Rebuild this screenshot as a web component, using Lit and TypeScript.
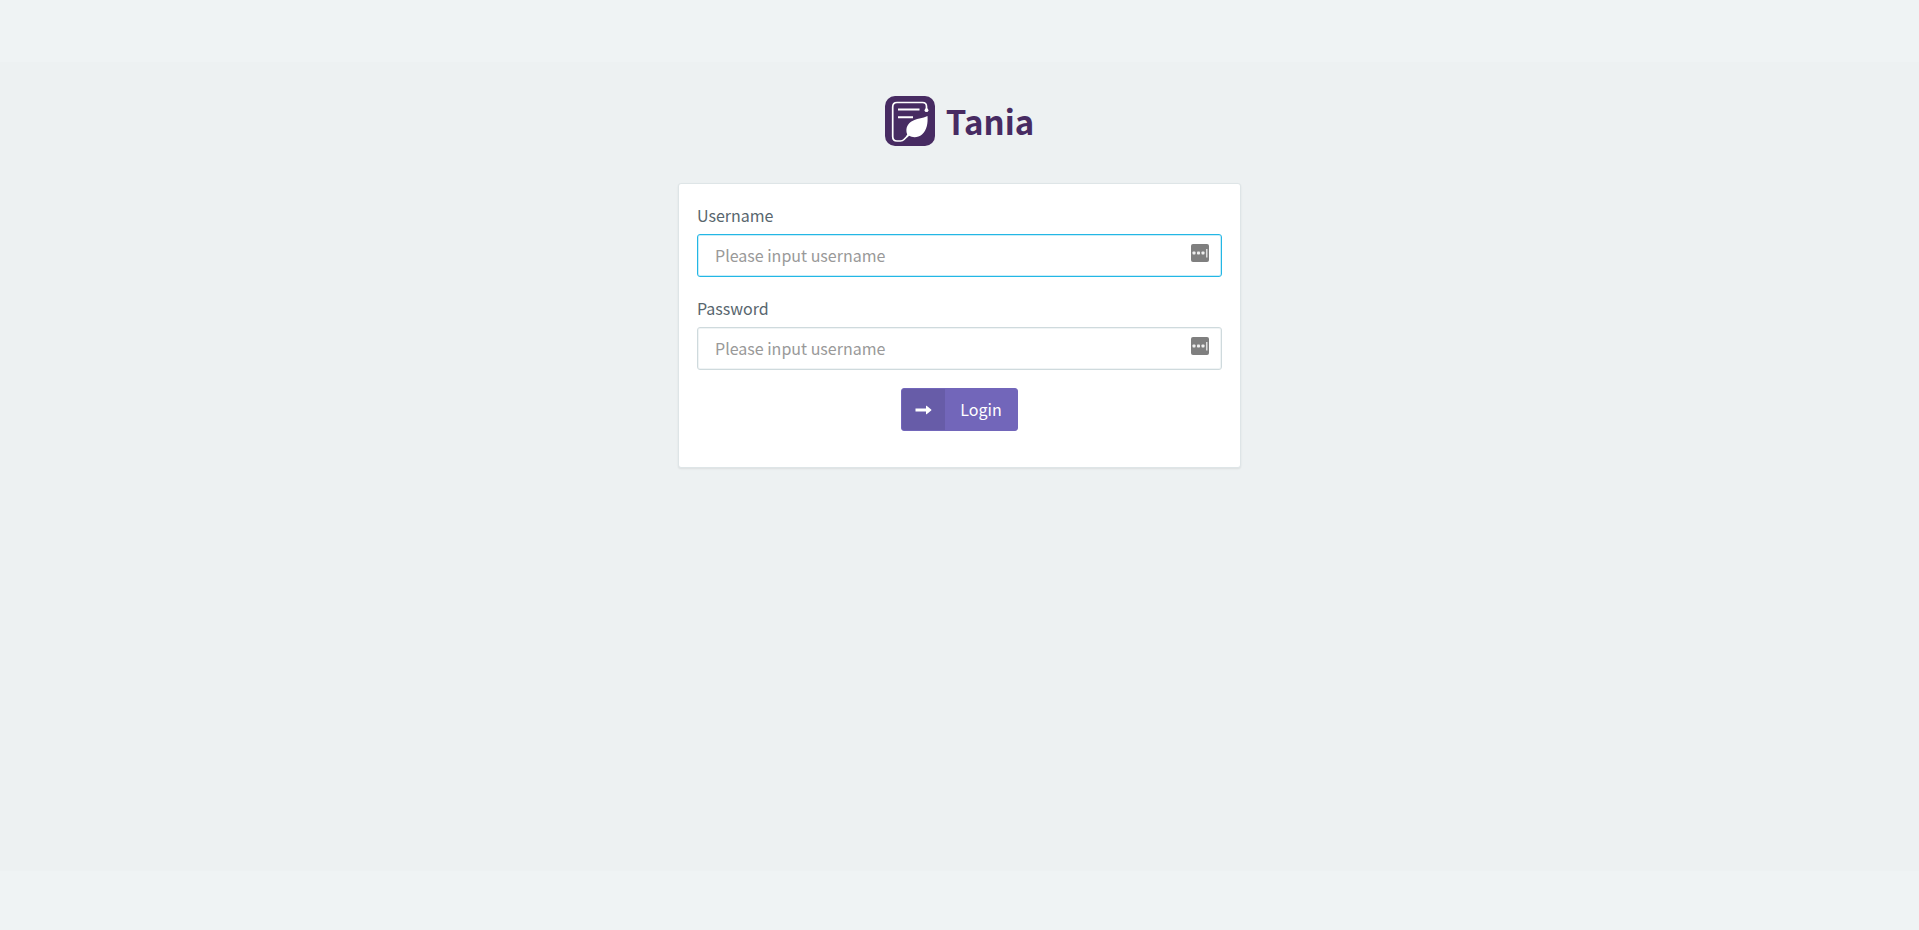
import { LitElement, html, css, svg } from "lit";
import { customElement, property } from "lit/decorators.js";

@customElement("tania-logo")
export class TaniaLogo extends LitElement {
  static styles = css`
    :host {
      display: flex;
      align-items: center;
      justify-content: center;
      gap: 11px;
      color: #472b62;
    }
    .mark {
      display: block;
      width: 50px;
      height: 50px;
    }
    .name {
      font-size: 33px;
      line-height: 50px;
      font-weight: 700;
    }
  `;

  render() {
    return html`
      <svg class="mark" viewBox="0 0 50 50" aria-hidden="true">
        <rect width="50" height="50" rx="10" fill="#472b62" />
        <path
          d="M41.5 14V10.5Q41.5 6.5 37.5 6.5H12Q7.7 6.5 7.7 11V40.5Q7.7 45 12 45H15.5Q17.5 45 19 43.5L23 39.5"
          fill="none"
          stroke="#fff"
          stroke-width="1.7"
        />
        <circle cx="41.5" cy="14.2" r="1.9" fill="#fff" />
        <path d="M13 13.5H34.5M13 21.3H28" stroke="#fff" stroke-width="2" />
        <path
          d="M42.5 20C43 27 42 34 37 38.5C33 42 27.5 41.8 24 39.8L22 41.5L21 40.5L22.2 38.5C20.5 34 21.5 29 26 25.8C31 22.3 38 22.3 42.5 20Z"
          fill="#fff"
        />
      </svg>
      <span class="name">Tania</span>
    `;
  }
}

@customElement("login-field")
export class LoginField extends LitElement {
  @property() label = "";
  @property() type = "text";
  @property() placeholder = "";
  @property({ type: Boolean }) active = false;

  static styles = css`
    :host {
      display: block;
    }
    .label {
      display: block;
      margin-bottom: 5px;
      line-height: 27px;
      color: #58666e;
    }
    .box {
      display: flex;
      box-sizing: border-box;
      height: 43px;
      border: 1px solid #cfdadd;
      border-radius: 3px;
      background: #fff;
      box-shadow: inset 0 0 0 1px #f0f4f5;
    }
    .box.active {
      border-color: #23b7e5;
      box-shadow: inset 0 0 0 1px #c8edf9;
    }
    .input {
      flex: 1;
      min-width: 0;
      padding: 0 0 2px 17px;
      border: 0;
      outline: 0;
      background: none;
      font: inherit;
      color: #58666e;
    }
    .input::placeholder {
      color: #999;
      opacity: 1;
    }
    .manager {
      width: 18px;
      height: 18px;
      margin: 9px 12px 0 8px;
    }
  `;

  render() {
    return html`
      <label class="label" for="field">${this.label}</label>
      <div class="box ${this.active ? "active" : ""}">
        <input class="input" id="field" type=${this.type} placeholder=${this.placeholder} />
        <svg class="manager" viewBox="0 0 18 18" aria-hidden="true">
          <rect width="18" height="18" rx="2" fill="#7f7f7f" />
          ${[1.5, 6, 10.5].map(
            (x) => svg`<rect x=${x} y="7.5" width="3" height="3" rx="0.8" fill="#eee" />`
          )}
          <rect x="15" y="5" width="1.5" height="8.5" fill="#ddd" />
        </svg>
      </div>
    `;
  }
}

@customElement("app-root")
export class AppRoot extends LitElement {
  static styles = css`
    :host {
      display: flex;
      flex-direction: column;
      min-height: 100vh;
      background: #eff3f4;
      font-family: "Noto Sans CJK SC", "Noto Sans", sans-serif;
      font-size: 16px;
      color: #58666e;
    }
    .header {
      height: 62px;
    }
    .footer {
      height: 59px;
    }
    .main {
      flex: 1;
      padding: 34px 18px;
      background: #edf1f2;
    }
    .column {
      width: 100%;
      max-width: 563px;
      margin: 0 auto;
    }
    .card {
      display: flex;
      flex-direction: column;
      gap: 18px;
      margin-top: 37px;
      padding: 18px 18px 36px;
      border: 1px solid #dee5e7;
      border-radius: 3px;
      background: #fff;
      box-shadow: 0 1px 2px rgba(0, 0, 0, 0.08);
    }
    .login {
      display: flex;
      align-self: center;
      align-items: stretch;
      box-sizing: border-box;
      height: 43px;
      padding: 0;
      border: 1px solid #7266ba;
      border-radius: 3px;
      overflow: hidden;
      background: #7266ba;
      color: #fff;
      font: inherit;
      cursor: pointer;
    }
    .icon {
      display: flex;
      align-items: center;
      justify-content: center;
      width: 43px;
      background: #675ca8;
    }
    .arrow {
      width: 17px;
      height: 10px;
    }
    .text {
      padding: 0 15px;
      line-height: 41px;
    }
  `;

  render() {
    return html`
      <header class="header"></header>
      <main class="main">
        <div class="column">
          <tania-logo></tania-logo>
          <form class="card" @submit=${(e: Event) => e.preventDefault()}>
            <login-field label="Username" placeholder="Please input username" active></login-field>
            <login-field label="Password" type="password" placeholder="Please input username"></login-field>
            <button class="login" type="submit">
              <span class="icon">
                <svg class="arrow" viewBox="0 0 17 10" aria-hidden="true">
                  <path
                    d="M.5 3.5H11V1Q11 .4 11.6 .8L16.2 4.5Q16.7 5 16.2 5.5L11.6 9.2Q11 9.6 11 9V6.5H.5Z"
                    fill="#fff"
                  />
                </svg>
              </span>
              <span class="text">Login</span>
            </button>
          </form>
        </div>
      </main>
      <footer class="footer"></footer>
    `;
  }
}
